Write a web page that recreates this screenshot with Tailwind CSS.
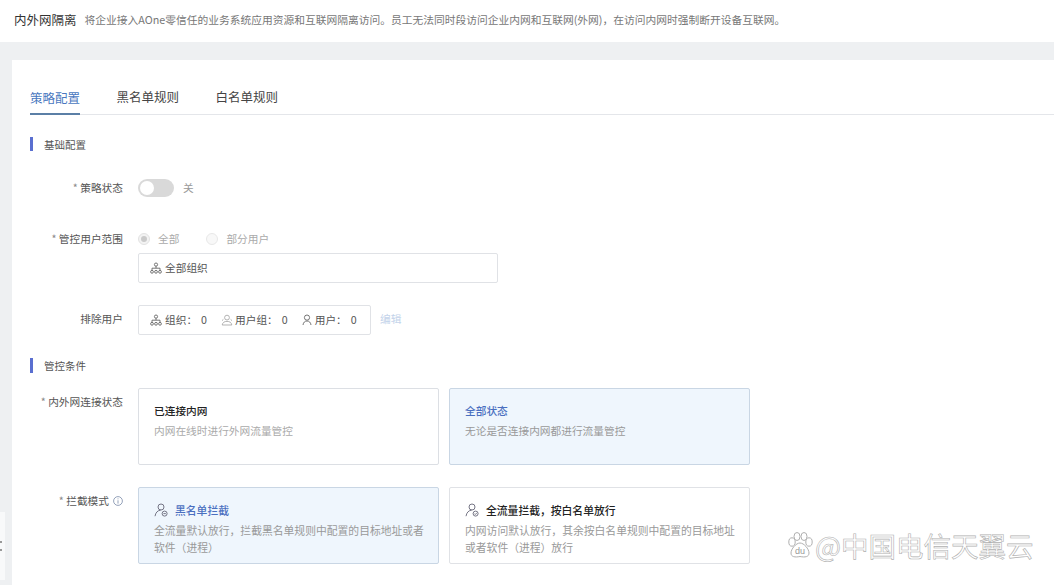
<!DOCTYPE html>
<html lang="zh-CN">
<head>
  <meta charset="UTF-8" />
  <title>内外网隔离</title>
  <script src="https://cdn.jsdelivr.net/npm/@tailwindcss/browser@4"></script>
</head>
<body class="relative h-[585px] overflow-hidden bg-[#eef0f2] font-['Noto_Sans_CJK_SC','Liberation_Sans',sans-serif] text-[#333]">

  <!-- Top bar -->
  <header class="h-[42px] bg-white pl-[14px] flex items-center pb-[2px]">
    <h1 class="text-[12.5px] text-[#333] whitespace-nowrap">内外网隔离</h1>
    <p class="ml-2 text-[10.75px] text-[#777] whitespace-nowrap">将企业接入AOne零信任的业务系统应用资源和互联网隔离访问。员工无法同时段访问企业内网和互联网(外网)，在访问内网时强制断开设备互联网。</p>
  </header>

  <!-- Card -->
  <main class="relative mt-[18px] ml-[12px] h-[525px] bg-white pl-[18px] overflow-hidden">

    <!-- Tabs -->
    <nav class="h-[55px] flex items-end gap-[36.5px] border-b border-[#e4e6ea] text-[12.5px] text-[#444]">
      <a class="h-[26px] -mb-px border-b-2 border-[#5b7fa6] text-[#4a78c0]">策略配置</a>
      <a class="h-[26px]">黑名单规则</a>
      <a class="h-[26px]">白名单规则</a>
    </nav>

    <!-- 基础配置 -->
    <div class="mt-[22px] h-[14px] flex items-center gap-[11px] text-[10.5px] text-[#555]">
      <span class="w-[3px] h-[14px] bg-[#5a6fd0]"></span><span class="mt-[2px]">基础配置</span>
    </div>

    <div class="mt-[27px] h-[20px] flex text-[10.7px]">
      <label class="w-[93px] text-right leading-[20px] text-[#555]"><span class="text-[#888]">*</span> 策略状态</label>
      <div class="ml-[15px] flex items-center gap-[9px]">
        <span class="w-[36px] h-[18px] rounded-full bg-[#d9d9d9] p-[2px]"><span class="block w-[14px] h-[14px] rounded-full bg-white"></span></span>
        <span class="text-[#999]">关</span>
      </div>
    </div>

    <div class="mt-[31px] flex text-[10.7px]">
      <label class="w-[93px] text-right leading-[20px] text-[#555]"><span class="text-[#888]">*</span> 管控用户范围</label>
      <div class="ml-[15px]">
        <div class="h-[20px] flex items-center text-[#aaa]">
          <span class="w-[12px] h-[12px] rounded-full border border-[#e2e2e2] bg-[#f3f3f3] flex items-center justify-center"><span class="w-[6px] h-[6px] rounded-full bg-[#cacaca]"></span></span>
          <span class="ml-[8px]">全部</span>
          <span class="ml-[27px] w-[12px] h-[12px] rounded-full border border-[#e8e8e8] bg-[#f8f8f8]"></span>
          <span class="ml-[8px]">部分用户</span>
        </div>
        <div class="mt-[4px] w-[360px] h-[30px] rounded-[2px] border border-[#e0e2e6] flex items-center pl-[11px] text-[#555]">
          <svg class="w-[12px] h-[12px] mr-[3px]" viewBox="0 0 12 12" fill="none" stroke="#666" stroke-width="0.9"><circle cx="6" cy="2.6" r="1.6"/><path d="M6 4.2V6.2M2 8.5V6.2H10V8.5"/><circle cx="2" cy="9.8" r="1.4"/><circle cx="6" cy="9.8" r="1.4"/><circle cx="10" cy="9.8" r="1.4"/></svg>
          全部组织
        </div>
      </div>
    </div>

    <div class="mt-[22px] flex text-[10.7px]">
      <label class="w-[93px] text-right leading-[28px] text-[#555]">排除用户</label>
      <div class="ml-[15px] w-[233px] h-[30px] rounded-[2px] border border-[#e0e2e6] flex items-center pl-[11px] text-[#555] whitespace-nowrap">
        <svg class="w-[12px] h-[12px] mr-[3px]" viewBox="0 0 12 12" fill="none" stroke="#666" stroke-width="0.9"><circle cx="6" cy="2.6" r="1.6"/><path d="M6 4.2V6.2M2 8.5V6.2H10V8.5"/><circle cx="2" cy="9.8" r="1.4"/><circle cx="6" cy="9.8" r="1.4"/><circle cx="10" cy="9.8" r="1.4"/></svg>
        <span>组织：</span><span class="ml-[4px]">0</span>
        <svg class="ml-[14px] w-[12px] h-[12px] mr-[2px]" viewBox="0 0 12 12" fill="none" stroke="#aaa" stroke-width="0.9"><circle cx="6" cy="3.6" r="2.4"/><path d="M1.2 11C1.6 8.4 3.4 7.4 6 7.4S10.4 8.4 10.8 11ZM1 6.6 2.4 5.4M11 6.6 9.6 5.4"/></svg>
        <span>用户组：</span><span class="ml-[4px]">0</span>
        <svg class="ml-[13px] w-[12px] h-[12px] mr-[2px]" viewBox="0 0 12 12" fill="none" stroke="#666" stroke-width="0.9"><circle cx="6" cy="3.6" r="2.6"/><path d="M2 11C2.4 8.4 3.8 7 6 7S9.6 8.4 10 11"/></svg>
        <span>用户：</span><span class="ml-[4px]">0</span>
      </div>
      <a class="ml-[9px] leading-[28px] text-[#c3d3ea]">编辑</a>
    </div>

    <!-- 管控条件 -->
    <div class="mt-[23px] h-[15px] flex items-center gap-[11px] text-[10.5px] text-[#555]">
      <span class="w-[3px] h-[15px] bg-[#5a6fd0]"></span>管控条件
    </div>

    <div class="mt-[15px] flex text-[10.7px]">
      <label class="w-[93px] pt-[4px] text-right leading-[20px] text-[#555] whitespace-nowrap"><span class="text-[#888]">*</span> 内外网连接状态</label>
      <div class="ml-[15px] flex gap-[10px]">
        <div class="w-[301px] h-[77px] rounded-[2px] border border-[#dcdfe4] px-[15px] pt-[13px]">
          <div class="font-medium text-[#222] leading-[18px]">已连接内网</div>
          <div class="mt-[2px] text-[#aaa] leading-[18px]">内网在线时进行外网流量管控</div>
        </div>
        <div class="w-[301px] h-[77px] rounded-[2px] border border-[#c9d6e4] bg-[#eff6fd] px-[15px] pt-[13px]">
          <div class="font-medium text-[#4a6fc0] leading-[18px]">全部状态</div>
          <div class="mt-[2px] text-[#999] leading-[18px]">无论是否连接内网都进行流量管控</div>
        </div>
      </div>
    </div>

    <div class="mt-[22px] flex text-[10.7px]">
      <label class="w-[93px] pt-[4px] flex justify-end items-start gap-[4px] leading-[20px] text-[#555]">
        <span><span class="text-[#888]">*</span> 拦截模式</span>
        <svg class="mt-[5px] w-[10px] h-[10px]" viewBox="0 0 10 10" fill="none" stroke="#7a8aa8" stroke-width="0.8"><circle cx="5" cy="5" r="4.4"/><path d="M5 4.3V7.6M5 2.4V3.3"/></svg>
      </label>
      <div class="ml-[15px] flex gap-[10px] text-[10.8px]">
        <div class="w-[301px] h-[77px] rounded-[2px] border border-[#c9d6e4] bg-[#eff6fd] px-[15px] pt-[13px]">
          <div class="flex items-center font-medium text-[#4a6fc0] leading-[18px]">
            <svg class="w-[14px] h-[14px] mr-[7px]" viewBox="0 0 14 14" fill="none" stroke="#667" stroke-width="0.9"><circle cx="7" cy="4" r="3"/><path d="M1 13.2C1.6 9.6 3.6 7.4 6.6 7.2"/><circle cx="10.6" cy="10.6" r="2.5"/><path d="M9.4 10.6H11.8"/></svg>
            黑名单拦截
          </div>
          <div class="mt-[3px] text-[#999] leading-[17px] whitespace-nowrap">全流量默认放行，拦截黑名单规则中配置的目标地址或者<br />软件（进程）</div>
        </div>
        <div class="w-[301px] h-[77px] rounded-[2px] border border-[#e0e2e6] px-[15px] pt-[13px]">
          <div class="flex items-center font-medium text-[#222] leading-[18px]">
            <svg class="w-[14px] h-[14px] mr-[7px]" viewBox="0 0 14 14" fill="none" stroke="#667" stroke-width="0.9"><circle cx="7" cy="4" r="3"/><path d="M1 13.2C1.6 9.6 3.6 7.4 6.6 7.2"/><circle cx="10.6" cy="10.6" r="2.5"/><path d="M9.4 10.6 10.3 11.5 11.9 9.8"/></svg>
            全流量拦截，按白名单放行
          </div>
          <div class="mt-[3px] text-[#999] leading-[17px] whitespace-nowrap">内网访问默认放行，其余按白名单规则中配置的目标地址<br />或者软件（进程）放行</div>
        </div>
      </div>
    </div>

    <!-- Watermark -->
    <div class="absolute left-[774px] top-[471px] flex items-center gap-[1px] text-white">
      <svg class="w-[28px] h-[28px]" viewBox="0 0 28 28" fill="#fff" stroke="#b0b0b0" stroke-width="1"><ellipse cx="6" cy="11" rx="3.2" ry="4.2"/><ellipse cx="11" cy="5.5" rx="3" ry="4"/><ellipse cx="18" cy="5.5" rx="3" ry="4"/><ellipse cx="23" cy="11" rx="3.2" ry="4.2"/><path d="M14 12C10 12 5 18 5 22C5 26 9 26.500 14 25.500C19 26.500 23 26 23 22C23 18 18 12 14 12Z"/><text x="14" y="23" text-anchor="middle" font-size="9" font-family="Liberation Sans" fill="#999" stroke="none">du</text></svg>
      <span class="text-[27.5px] leading-[28px] whitespace-nowrap [-webkit-text-stroke:0.6px_#b0b0b0]">@中国电信天翼云</span>
    </div>
  </main>

  <!-- Edge of a collapsed panel, lower left -->
  <div class="absolute left-0 top-[512px] w-[5px] h-[68px] bg-[#f8f9fa] flex flex-col justify-center gap-[6px]">
    <span class="w-[2px] h-[2px] bg-[#999]"></span>
    <span class="w-[2px] h-[2px] bg-[#999]"></span>
  </div>

</body>
</html>
